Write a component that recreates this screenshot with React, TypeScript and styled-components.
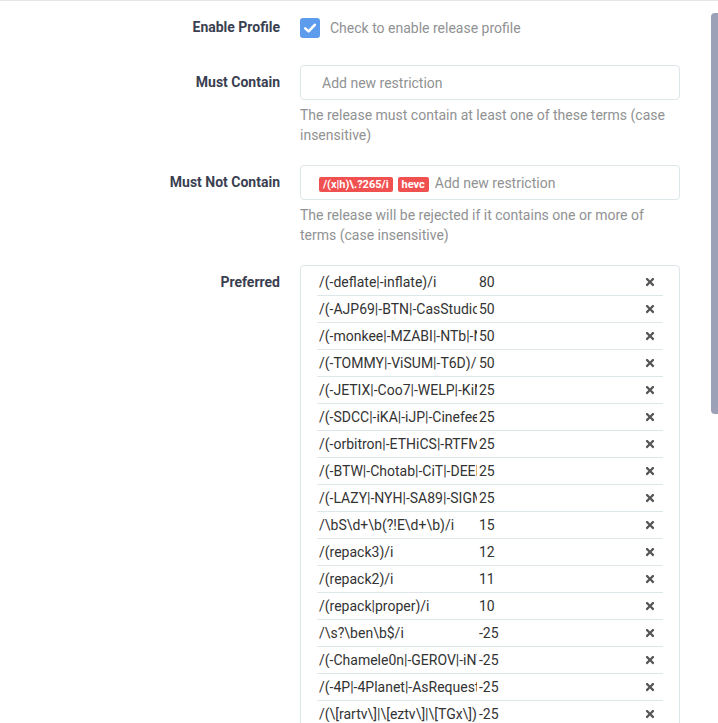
import styled, { createGlobalStyle } from 'styled-components';
import { FaTimes } from 'react-icons/fa';

const GlobalStyle = createGlobalStyle`
  html, body {
    margin: 0;
    padding: 0;
    background: #fff;
  }
  body {
    font-family: Roboto, 'Open Sans', 'Helvetica Neue', Arial, sans-serif;
    font-size: 14px;
    color: #515253;
  }
`;

interface PreferredTerm {
  term: string;
  score: number;
}

const preferred: PreferredTerm[] = [
  { term: '/(-deflate|-inflate)/i', score: 80 },
  { term: '/(-AJP69|-BTN|-CasStudio|-CtrlHD|-FLUX)/i', score: 50 },
  { term: '/(-monkee|-MZABI|-NTb|-NTG)/i', score: 50 },
  { term: '/(-TOMMY|-ViSUM|-T6D)/i', score: 50 },
  { term: '/(-JETIX|-Coo7|-WELP|-KiNGS)/i', score: 25 },
  { term: '/(-SDCC|-iKA|-iJP|-Cinefeel)/i', score: 25 },
  { term: '/(-orbitron|-ETHiCS|-RTFM)/i', score: 25 },
  { term: '/(-BTW|-Chotab|-CiT|-DEEP)/i', score: 25 },
  { term: '/(-LAZY|-NYH|-SA89|-SIGMA)/i', score: 25 },
  { term: '/\\bS\\d+\\b(?!E\\d+\\b)/i', score: 15 },
  { term: '/(repack3)/i', score: 12 },
  { term: '/(repack2)/i', score: 11 },
  { term: '/(repack|proper)/i', score: 10 },
  { term: '/\\s?\\ben\\b$/i', score: -25 },
  { term: '/(-Chamele0n|-GEROV|-iNT)/i', score: -25 },
  { term: '/(-4P|-4Planet|-AsRequested)/i', score: -25 },
  { term: '/(\\[rartv\\]|\\[eztv\\]|\\[TGx\\])/i', score: -25 },
];

const Page = styled.div`
  position: relative;
  height: 723px;
  box-sizing: border-box;
  border-top: 1px solid #e5e5e5;
  padding-top: 9px;
  overflow: hidden;
`;

const FormGroup = styled.div`
  display: grid;
  grid-template-columns: 280px 380px;
  column-gap: 20px;
  margin-bottom: 20px;
`;

const Label = styled.label`
  text-align: right;
  font-weight: bold;
  line-height: 35px;
  color: #3a3f51;
`;

const CheckRow = styled.div`
  display: flex;
  align-items: center;
  gap: 10px;
  height: 35px;
  color: #909293;
`;

const CheckBox = styled.span`
  display: flex;
  align-items: center;
  justify-content: center;
  width: 20px;
  height: 20px;
  border-radius: 3px;
  background: #5d9cec;
`;

const InputBox = styled.div`
  display: flex;
  align-items: center;
  height: 35px;
  box-sizing: border-box;
  border: 1px solid #dde6e9;
  border-radius: 4px;
  padding-left: 18px;
`;

const TagList = styled.div`
  display: flex;
  gap: 5px;
  margin-right: 3px;
  padding-top: 3px;
`;

const Tag = styled.span`
  display: inline-block;
  padding: 0 4px;
  border-radius: 2px;
  background: #f05050;
  color: #fff;
  font-size: 11px;
  font-weight: bold;
  line-height: 15px;
`;

const Placeholder = styled.span`
  padding-left: 3px;
  color: #909293;
`;

const HelpText = styled.div`
  grid-column: 2;
  margin-top: 5px;
  line-height: 20px;
  color: #909293;
`;

const TermBox = styled.div`
  border: 1px solid #dde6e9;
  border-radius: 4px;
  padding: 3px 16px;
`;

const TermRow = styled.div`
  display: flex;
  align-items: center;
  height: 26px;
  border-bottom: 1px solid #dde6e9;
  color: #333;
`;

const TermKey = styled.span`
  flex: 0 0 160px;
  box-sizing: border-box;
  margin-right: 2px;
  padding-left: 2px;
  overflow: hidden;
  white-space: nowrap;
`;

const TermScore = styled.span`
  flex: 1;
`;

const RemoveButton = styled.span`
  display: flex;
  align-items: center;
  justify-content: center;
  width: 26px;
  color: #555;
`;

const ScrollThumb = styled.div`
  position: absolute;
  top: 12px;
  right: 0;
  width: 7px;
  height: 401px;
  border-radius: 4px 0 0 4px;
  background: #9ca1b8;
`;

const TagInput: React.FC<{ tags: string[] }> = ({ tags }) => (
  <InputBox>
    {tags.length > 0 && (
      <TagList>
        {tags.map((t) => (
          <Tag key={t}>{t}</Tag>
        ))}
      </TagList>
    )}
    <Placeholder>Add new restriction</Placeholder>
  </InputBox>
);

export default function App() {
  return (
    <Page>
      <GlobalStyle />

      <FormGroup>
        <Label>Enable Profile</Label>
        <CheckRow>
          <CheckBox>
            <svg width="14" height="14" viewBox="0 0 14 14">
              <path d="M2.2 7.4 L5.6 10.4 L11.8 3.8" fill="none" stroke="#fff" strokeWidth="2.6" strokeLinecap="round" strokeLinejoin="round" />
            </svg>
          </CheckBox>
          Check to enable release profile
        </CheckRow>
      </FormGroup>

      <FormGroup>
        <Label>Must Contain</Label>
        <TagInput tags={[]} />
        <HelpText>The release must contain at least one of these terms (case insensitive)</HelpText>
      </FormGroup>

      <FormGroup>
        <Label>Must Not Contain</Label>
        <TagInput tags={['/(x|h)\\.?265/i', 'hevc']} />
        <HelpText>The release will be rejected if it contains one or more of terms (case insensitive)</HelpText>
      </FormGroup>

      <FormGroup>
        <Label>Preferred</Label>
        <TermBox>
          {preferred.map((p, i) => (
            <TermRow key={i}>
              <TermKey>{p.term}</TermKey>
              <TermScore>{p.score}</TermScore>
              <RemoveButton>
                <FaTimes size={12} />
              </RemoveButton>
            </TermRow>
          ))}
        </TermBox>
      </FormGroup>

      <ScrollThumb />
    </Page>
  );
}
